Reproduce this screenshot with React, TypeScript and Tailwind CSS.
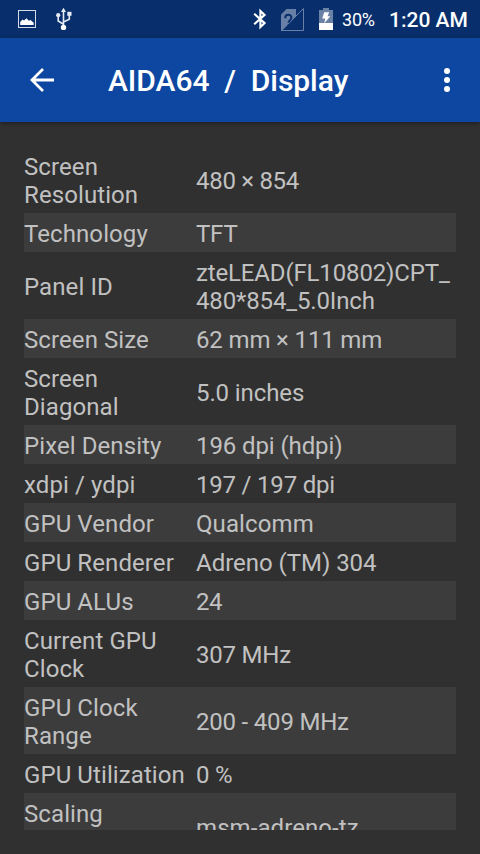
import React from "react";

type Row = { label: string; value: string; tracking: string };

const rows: Row[] = [
  { label: "Screen\nResolution", value: "480 × 854", tracking: "tracking-[-0.3px]" },
  { label: "Technology", value: "TFT", tracking: "tracking-[-0.2px]" },
  { label: "Panel ID", value: "zteLEAD(FL10802)CPT_\n480*854_5.0Inch", tracking: "tracking-[-0.15px]" },
  { label: "Screen Size", value: "62 mm × 111 mm", tracking: "tracking-[-0.15px]" },
  { label: "Screen\nDiagonal", value: "5.0 inches", tracking: "tracking-[-0.1px]" },
  { label: "Pixel Density", value: "196 dpi (hdpi)", tracking: "tracking-[-0.1px]" },
  { label: "xdpi / ydpi", value: "197 / 197 dpi", tracking: "tracking-[-0.2px]" },
  { label: "GPU Vendor", value: "Qualcomm", tracking: "tracking-[0.1px]" },
  { label: "GPU Renderer", value: "Adreno (TM) 304", tracking: "tracking-[-0.03px]" },
  { label: "GPU ALUs", value: "24", tracking: "tracking-[-0.4px]" },
  { label: "Current GPU\nClock", value: "307 MHz", tracking: "tracking-[-0.2px]" },
  { label: "GPU Clock\nRange", value: "200 - 409 MHz", tracking: "tracking-[-0.2px]" },
  { label: "GPU Utilization", value: "0 %", tracking: "tracking-[-0.2px]" },
  { label: "Scaling\nGovernor", value: "msm-adreno-tz", tracking: "tracking-[0.08px]" },
];

function PictureIcon() {
  return (
    <svg className="ml-[17px] h-5 w-5" viewBox="0 0 20 20" fill="none">
      <rect x="1.5" y="1.5" width="17" height="17" stroke="#d5dce8" strokeWidth="1" />
      <path d="M3.2 16v-3l2.3-2.6 1.5 1 2.5-2.1 2.3 2.4 1.7-.7 3.2 2.8V16z" fill="#fff" />
    </svg>
  );
}

function UsbIcon() {
  return (
    <svg className="ml-[18px] h-6 w-[18px]" viewBox="0 0 18 24" fill="none">
      <path d="M8.5 20V4M8.5 17.3L3.2 14V9M8.5 15l5.8-2.7V7" stroke="#e4eaf3" strokeWidth="1.6" />
      <path d="M8.5 0.8l2.5 4.2H6z" fill="#e4eaf3" />
      <circle cx="8.5" cy="20.4" r="2.7" fill="#fff" />
      <circle cx="3.2" cy="8.2" r="2.1" fill="#e4eaf3" />
      <rect x="12.3" y="4.8" width="4.2" height="4" fill="#e4eaf3" />
    </svg>
  );
}

function BluetoothIcon() {
  return (
    <svg className="h-[22px] w-4" viewBox="0 0 16 22" fill="none">
      <path d="M2.2 5.8l10.4 9.3L8.4 19V3l4.2 3.9L2.2 16.2" stroke="#fff" strokeWidth="2.1" />
    </svg>
  );
}

function SimIcon() {
  return (
    <svg className="ml-[12px] h-[25px] w-[25px]" viewBox="0 0 25 25">
      <path d="M1 24V7.5L6.5 2H16v7.5L1.8 24z" fill="#6880a6" />
      <path d="M1.5 23.5L23.5 1.5V23.5z" fill="none" stroke="#6880a6" strokeWidth="1" />
      <path d="M5.2 11.2C5.2 6.6 11.4 7 11.4 10.7c0 2.4-2.9 2.6-2.9 5.1M8.5 17.4v2.4" fill="none" stroke="#082f6c" strokeWidth="2" />
    </svg>
  );
}

function BatteryIcon() {
  return (
    <svg className="ml-[14px] h-[22px] w-[14px]" viewBox="0 0 14 22">
      <path d="M4 0h6v2h4v13H0V2h4z" fill="#6b82a7" />
      <path d="M0 15h14v7H0z" fill="#fff" />
      <path d="M5.2 4.3h5L8.5 8.2h2.8L5.3 15.2l.9-4.6H3.2z" fill="#fff" />
    </svg>
  );
}

function StatusBar() {
  return (
    <div className="flex h-[38px] shrink-0 items-center bg-[#082f6c] text-white">
      <PictureIcon />
      <UsbIcon />
      <div className="ml-auto flex items-center">
        <BluetoothIcon />
        <SimIcon />
        <BatteryIcon />
        <span className="ml-[9px] w-[47px] pt-0.5 whitespace-nowrap text-[18px] leading-6 tracking-[-0.2px]">30%</span>
        <span className="mr-3 w-[79px] pt-0.5 whitespace-nowrap text-[21px] leading-6 font-medium">1:20 AM</span>
      </div>
    </div>
  );
}

function AppBar() {
  return (
    <header className="z-10 flex h-[84px] shrink-0 items-center bg-[#0d47a1] text-white shadow-[0_1px_4px_rgba(0,0,0,0.45)]">
      <button aria-label="Back" className="ml-[30px]">
        <svg className="block h-6 w-6" viewBox="0 0 24 24" fill="none" stroke="#fff" strokeWidth="2.8">
          <path d="M24 12H2M13 1L2 12l11 11" />
        </svg>
      </button>
      <h1 className="ml-[54px] pt-0.5 whitespace-pre text-[30px] leading-9 font-medium tracking-[-0.04px]">AIDA64  /  Display</h1>
      <button aria-label="More options" className="mr-[30px] ml-auto">
        <svg className="block h-6 w-[6px]" viewBox="0 0 6 24" fill="#fff">
          <circle cx="3" cy="3" r="3" />
          <circle cx="3" cy="12" r="3" />
          <circle cx="3" cy="21" r="3" />
        </svg>
      </button>
    </header>
  );
}

export default function App() {
  return (
    <div className="flex h-[854px] w-[480px] flex-col overflow-hidden bg-[#303030] font-['Roboto',sans-serif]">
      <StatusBar />
      <AppBar />
      <main className="mx-6 mt-6 mb-6 min-h-0 flex-1 overflow-hidden text-[24px] leading-7 text-[#c1c1c1]">
        {rows.map((row) => (
          <div key={row.label} className="flex items-center pt-[7px] pb-1 whitespace-pre even:bg-[#3c3c3c]">
            <div className="w-[172px] shrink-0 tracking-[0.09px]">{row.label}</div>
            <div className={row.tracking}>{row.value}</div>
          </div>
        ))}
      </main>
    </div>
  );
}
